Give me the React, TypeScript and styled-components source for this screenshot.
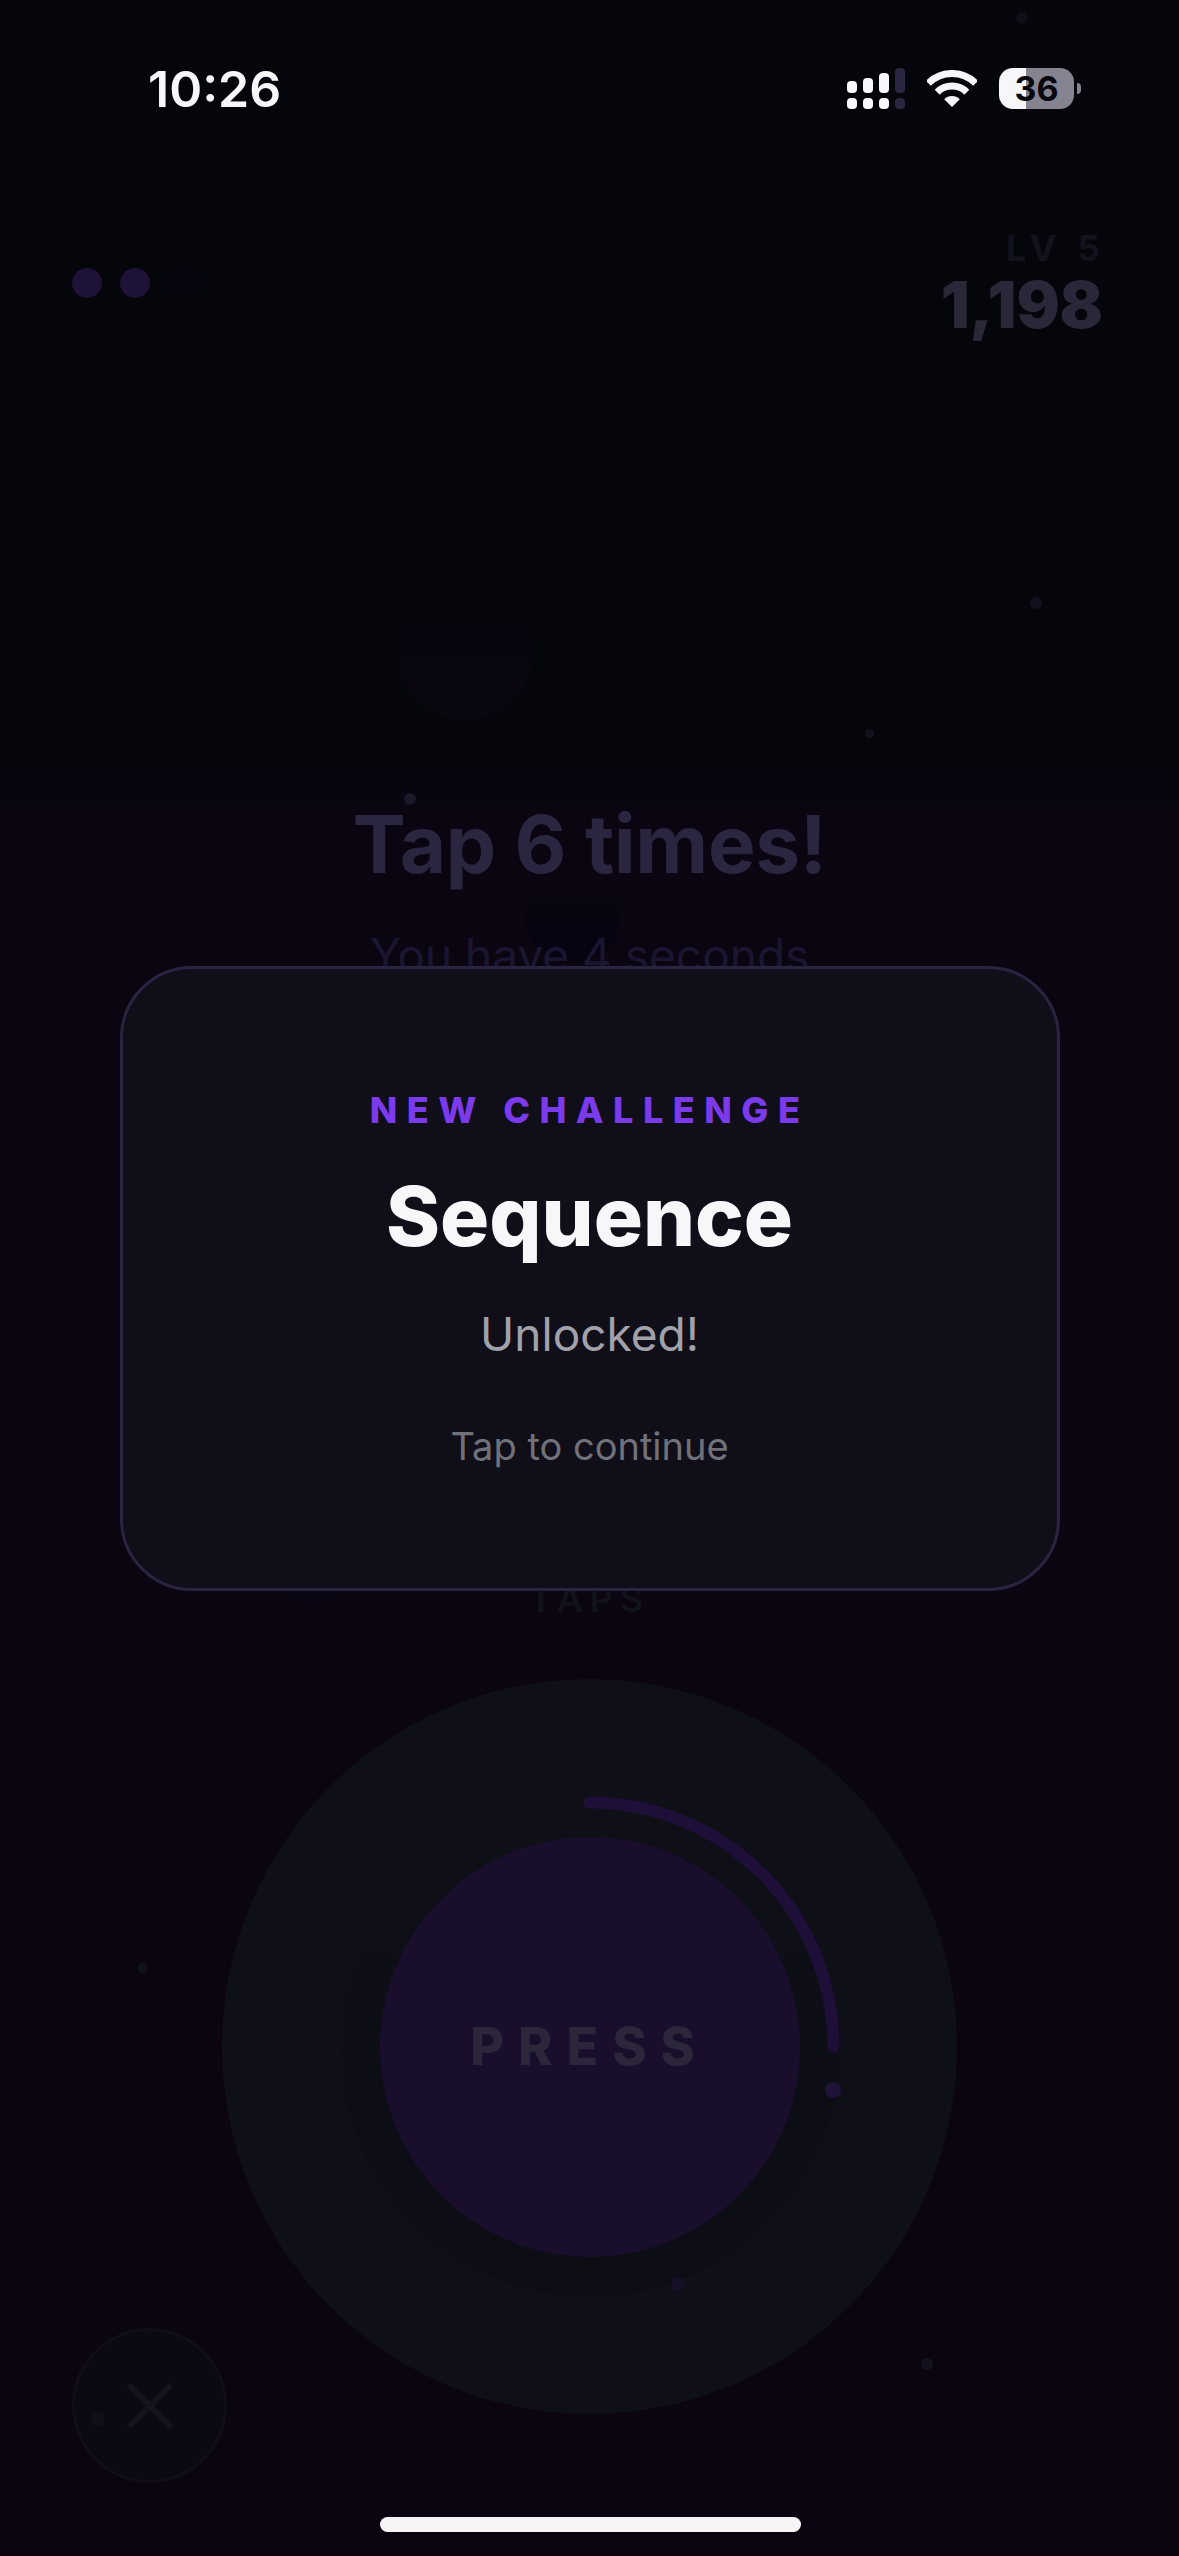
import styled, { createGlobalStyle } from 'styled-components'

interface DotProps {
  $color: string
}

interface ParticleProps {
  $x: number
  $y: number
  $size: number
  $fill: string
}

const blobs = [
  { x: 465, y: 652, size: 136, fill: 'linear-gradient(180deg, #05050c 25%, #0a0610 65%)' },
  { x: 572, y: 915, size: 96, fill: 'linear-gradient(180deg, #0a0511 25%, #060410 60%)' },
  { x: 310, y: 1570, size: 70, fill: '#0b0613' },
]

const particles = [
  { x: 1022, y: 18, size: 12, fill: '#0e0e18' },
  { x: 1036, y: 603, size: 12, fill: '#12121e' },
  { x: 869, y: 733, size: 9, fill: '#12121e' },
  { x: 410, y: 799, size: 12, fill: '#1a1828' },
  { x: 143, y: 1968, size: 10, fill: '#12121e' },
  { x: 833, y: 2090, size: 16, fill: '#1f1338' },
  { x: 678, y: 2284, size: 14, fill: '#171028' },
  { x: 927, y: 2364, size: 12, fill: '#13111d' },
  { x: 98, y: 2419, size: 14, fill: '#110f1a' },
]

const GlobalStyle = createGlobalStyle`
  html, body {
    margin: 0;
    padding: 0;
    background: #05050c;
  }
  * {
    box-sizing: border-box;
  }
`

const Page = styled.div`
  position: relative;
  width: 1179px;
  height: 2556px;
  overflow: hidden;
  display: flex;
  flex-direction: column;
  font-family: Inter, 'Noto Sans', sans-serif;
  background: linear-gradient(180deg, #05050c 0, #05050c 760px, #0a0511 810px, #0a0511 100%);
`

const StatusBar = styled.div`
  height: 177px;
  display: flex;
  align-items: center;
  justify-content: space-between;
  padding: 0 105px 0 148px;
`

const Time = styled.div`
  color: #f7f7f9;
  font-size: 50px;
  font-weight: 600;
  line-height: 60px;
`

const StatusIcons = styled.div`
  display: flex;
  align-items: center;
  gap: 22px;
`

const Battery = styled.div`
  position: relative;
  width: 75px;
  height: 41px;
  border-radius: 14px;
  background: linear-gradient(90deg, #f7f7f9 36%, #85838f 36%);
  color: #07070e;
  font-size: 34px;
  font-weight: 700;
  line-height: 41px;
  text-align: center;
  &::after {
    content: '';
    position: absolute;
    left: 78px;
    top: 15px;
    width: 4px;
    height: 11px;
    border-radius: 0 6px 6px 0;
    background: #85838f;
  }
`

const Hud = styled.div`
  margin-top: 51px;
  display: flex;
  justify-content: space-between;
  padding: 0 76px 0 72px;
`

const Lives = styled.div`
  margin-top: 40px;
  display: flex;
  gap: 18px;
`

const Life = styled.div<DotProps>`
  width: 30px;
  height: 30px;
  border-radius: 50%;
  background: ${props => props.$color};
`

const ScoreBox = styled.div`
  display: flex;
  flex-direction: column;
  align-items: flex-end;
`

const Level = styled.div`
  margin-right: -3px;
  color: #12121c;
  font-size: 36px;
  font-weight: 700;
  line-height: 40px;
  letter-spacing: 6px;
`

const Score = styled.div`
  color: #2a2838;
  font-size: 64px;
  font-weight: 900;
  line-height: 74px;
`

const Prompt = styled.div`
  position: relative;
  margin-top: 452px;
  display: flex;
  flex-direction: column;
  align-items: center;
  gap: 31px;
`

const PromptTitle = styled.div`
  color: #2a2640;
  font-size: 80px;
  font-weight: 700;
  line-height: 100px;
  letter-spacing: -0.3px;
`

const PromptSub = styled.div`
  color: #1a1530;
  font-size: 46px;
  line-height: 60px;
`

const TapsLabel = styled.div`
  margin-top: 594px;
  color: #12121c;
  font-size: 36px;
  font-weight: 600;
  line-height: 40px;
  letter-spacing: 7px;
  text-align: center;
`

const ButtonArea = styled.div`
  margin-top: 60px;
  display: flex;
  justify-content: center;
`

const OuterRing = styled.div`
  position: relative;
  width: 735px;
  height: 735px;
  border-radius: 50%;
  background: #0f0f18;
  display: flex;
  align-items: center;
  justify-content: center;
`

const Track = styled.div`
  width: 500px;
  height: 500px;
  border-radius: 50%;
  background: linear-gradient(180deg, #0f0f18 10%, #0d0d15 60%);
  display: flex;
  align-items: center;
  justify-content: center;
`

const PressButton = styled.div`
  width: 420px;
  height: 420px;
  border-radius: 50%;
  background: #190f2d;
  color: #2b2639;
  font-size: 52px;
  font-weight: 800;
  letter-spacing: 14px;
  display: flex;
  align-items: center;
  justify-content: center;
`

const ProgressArc = styled.svg`
  position: absolute;
  inset: 0;
`

const CloseButton = styled.div`
  position: absolute;
  left: 72px;
  bottom: 73px;
  width: 155px;
  height: 155px;
  border-radius: 50%;
  border: 3px solid #100f19;
  background: #0b0912;
  display: flex;
  align-items: center;
  justify-content: center;
`

const Particle = styled.div<ParticleProps>`
  position: absolute;
  left: ${props => props.$x - props.$size / 2}px;
  top: ${props => props.$y - props.$size / 2}px;
  width: ${props => props.$size}px;
  height: ${props => props.$size}px;
  border-radius: 50%;
  background: ${props => props.$fill};
`

const Overlay = styled.div`
  position: absolute;
  inset: 0;
  display: flex;
  align-items: center;
  justify-content: center;
`

const Card = styled.div`
  width: 940px;
  height: 625px;
  padding-top: 117px;
  border: 3px solid #2a2440;
  border-radius: 72px;
  background: #0f0e19;
  display: flex;
  flex-direction: column;
  align-items: center;
`

const Eyebrow = styled.div`
  color: #7c3aed;
  font-size: 36px;
  font-weight: 800;
  line-height: 48px;
  letter-spacing: 9.5px;
`

const CardTitle = styled.div`
  margin-top: 33px;
  color: #f7f7f9;
  font-size: 82px;
  font-weight: 800;
  line-height: 100px;
`

const CardSub = styled.div`
  margin-top: 37px;
  color: #a1a1aa;
  font-size: 46px;
  line-height: 60px;
`

const CardHint = styled.div`
  margin-top: 57px;
  color: #71717a;
  font-size: 38px;
  line-height: 50px;
`

const HomeIndicator = styled.div`
  position: absolute;
  left: 380px;
  bottom: 24px;
  width: 421px;
  height: 15px;
  border-radius: 8px;
  background: #f5f5f8;
`

const SignalIcon = () => (
  <svg width="58" height="41" viewBox="0 0 58 41">
    <rect x="0" y="13" width="10" height="12" rx="4" fill="#f7f7f9" />
    <rect x="16" y="10" width="10" height="15" rx="4" fill="#f7f7f9" />
    <rect x="32" y="5" width="10" height="20" rx="4" fill="#f7f7f9" />
    <rect x="48" y="0" width="10" height="25" rx="4" fill="#2a2640" />
    <rect x="0" y="30" width="10" height="11" rx="4" fill="#f7f7f9" />
    <rect x="16" y="30" width="10" height="11" rx="4" fill="#f7f7f9" />
    <rect x="32" y="30" width="10" height="11" rx="4" fill="#f7f7f9" />
    <rect x="48" y="30" width="10" height="11" rx="4" fill="#2a2640" />
  </svg>
)

const WifiIcon = () => (
  <svg width="50" height="37" viewBox="0 0 50 37">
    <path d="M1.3 13.3A33.5 33.5 0 0 1 48.7 13.3" fill="none" stroke="#f7f7f9" strokeWidth="7" />
    <path d="M10.2 22.2A21 21 0 0 1 39.8 22.2" fill="none" stroke="#f7f7f9" strokeWidth="7" />
    <path d="M25 37L17.2 29.2A11 11 0 0 1 32.8 29.2Z" fill="#f7f7f9" />
  </svg>
)

export default function App() {
  return (
    <Page>
      <GlobalStyle />
      {blobs.map(p => (
        <Particle key={`${p.x}-${p.y}`} $x={p.x} $y={p.y} $size={p.size} $fill={p.fill} />
      ))}
      <StatusBar>
        <Time>10:26</Time>
        <StatusIcons>
          <SignalIcon />
          <WifiIcon />
          <Battery>36</Battery>
        </StatusIcons>
      </StatusBar>
      <Hud>
        <Lives>
          <Life $color="#1e1238" />
          <Life $color="#1e1238" />
          <Life $color="#090510" />
        </Lives>
        <ScoreBox>
          <Level>LV 5</Level>
          <Score>1,198</Score>
        </ScoreBox>
      </Hud>
      <Prompt>
        <PromptTitle>Tap 6 times!</PromptTitle>
        <PromptSub>You have 4 seconds</PromptSub>
      </Prompt>
      <TapsLabel>TAPS</TapsLabel>
      <ButtonArea>
        <OuterRing>
          <Track>
            <PressButton>PRESS</PressButton>
          </Track>
          <ProgressArc width="735" height="735" viewBox="0 0 735 735">
            <path
              d="M367.5 123.5A244 244 0 0 1 611.5 367.5"
              fill="none"
              stroke="#1e0f38"
              strokeWidth="12"
              strokeLinecap="round"
            />
          </ProgressArc>
        </OuterRing>
      </ButtonArea>
      <CloseButton>
        <svg width="46" height="46" viewBox="0 0 46 46">
          <path d="M2 2L44 44M44 2L2 44" stroke="#15131e" strokeWidth="6" />
        </svg>
      </CloseButton>
      {particles.map(p => (
        <Particle key={`${p.x}-${p.y}`} $x={p.x} $y={p.y} $size={p.size} $fill={p.fill} />
      ))}
      <Overlay>
        <Card>
          <Eyebrow>NEW CHALLENGE</Eyebrow>
          <CardTitle>Sequence</CardTitle>
          <CardSub>Unlocked!</CardSub>
          <CardHint>Tap to continue</CardHint>
        </Card>
      </Overlay>
      <HomeIndicator />
    </Page>
  )
}
